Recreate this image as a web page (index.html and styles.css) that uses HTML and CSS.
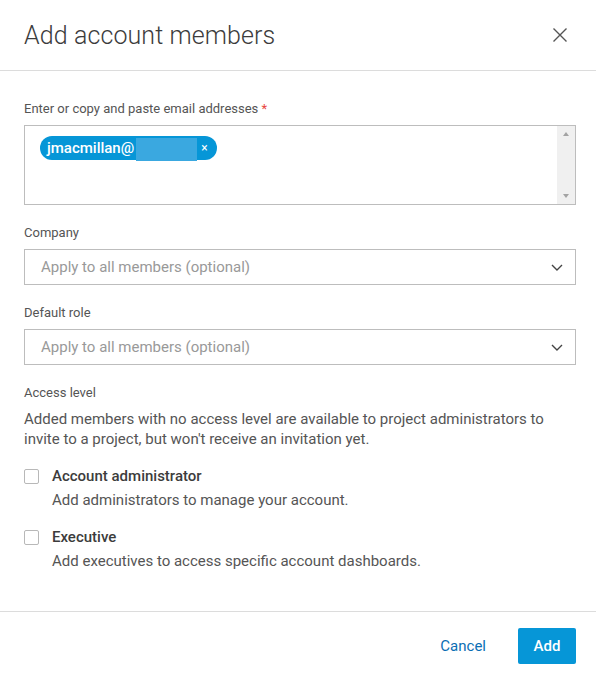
FILE: index.html
```html
<!DOCTYPE html>
<html lang="en">
<head>
    <meta charset="UTF-8" />
    <title>Add account members</title>
    <link rel="stylesheet" href="styles.css">
</head>
<body>

    <div class="dialog">
        <div class="dialog-header">
            <h1>Add account members</h1>
            <button class="close" aria-label="Close">
                <svg width="16" height="16" viewBox="0 0 16 16">
                    <path d="M1.5 1.5 L14.5 14.5 M14.5 1.5 L1.5 14.5" stroke="#555" stroke-width="1.4" fill="none" />
                </svg>
            </button>
        </div>

        <div class="dialog-body">
            <label class="field-label">Enter or copy and paste email addresses <span class="req">*</span></label>
            <div class="emails">
                <div class="emails-inner">
                    <span class="chip">jmacmillan@<span class="redacted"></span><span class="chip-x">×</span></span>
                </div>
                <div class="scrollbar">
                    <span class="arrow-up"></span>
                    <span class="arrow-down"></span>
                </div>
            </div>

            <label class="field-label">Company</label>
            <div class="select">
                <span>Apply to all members (optional)</span>
                <svg width="12" height="7" viewBox="0 0 12 7">
                    <path d="M1 1 L6 6 L11 1" stroke="#444" stroke-width="1.4" fill="none" />
                </svg>
            </div>

            <label class="field-label">Default role</label>
            <div class="select">
                <span>Apply to all members (optional)</span>
                <svg width="12" height="7" viewBox="0 0 12 7">
                    <path d="M1 1 L6 6 L11 1" stroke="#444" stroke-width="1.4" fill="none" />
                </svg>
            </div>

            <label class="field-label">Access level</label>
            <p class="hint">Added members with no access level are available to project administrators to invite to a project, but won't receive an invitation yet.</p>

            <div class="option">
                <span class="checkbox"></span>
                <div>
                    <div class="option-title">Account administrator</div>
                    <div class="option-desc">Add administrators to manage your account.</div>
                </div>
            </div>

            <div class="option">
                <span class="checkbox"></span>
                <div>
                    <div class="option-title">Executive</div>
                    <div class="option-desc">Add executives to access specific account dashboards.</div>
                </div>
            </div>
        </div>

        <div class="dialog-footer">
            <button class="btn-link">Cancel</button>
            <button class="btn-primary">Add</button>
        </div>
    </div>

</body>
</html>
```

FILE: styles.css
```css
body {
    font-family: Roboto, "Liberation Sans", sans-serif;
    background-color: #ffffff;
    color: #3c3c3c;
    margin: 0;
}

.dialog {
    width: 596px;
    height: 676px;
    display: flex;
    flex-direction: column;
}

.dialog-header {
    height: 71px;
    border-bottom: 1px solid #dcdcdc;
    display: flex;
    align-items: center;
    justify-content: space-between;
    padding: 0 24px;
    box-sizing: border-box;
}

h1 {
    font-size: 25px;
    font-weight: 300;
    color: #3c3c3c;
    margin: 0;
    letter-spacing: 0.1px;
}

.close {
    border: none;
    background: none;
    padding: 0;
    margin-right: 4px;
    display: flex;
}

.dialog-body {
    padding: 30px 20px 0 24px;
    flex: 1;
}

.field-label {
    display: block;
    font-size: 13px;
    line-height: 15px;
    color: #555;
    margin-bottom: 9px;
}

.req {
    color: #e8463e;
}

.emails {
    height: 80px;
    border: 1px solid #bdbdbd;
    box-sizing: border-box;
    display: flex;
    margin-bottom: 20px;
}

.emails-inner {
    flex: 1;
    padding: 10px 15px;
}

.chip {
    display: inline-flex;
    align-items: center;
    height: 24px;
    border-radius: 12px;
    background-color: #0696d7;
    color: #fff;
    font-size: 15px;
    font-weight: 500;
    padding: 0 9px 0 7px;
}

.redacted {
    display: inline-block;
    width: 61px;
    height: 23px;
    background-color: #3aa8e0;
    margin: 2px 0 0 2px;
    align-self: flex-start;
}

.chip-x {
    font-size: 12px;
    font-weight: 400;
    margin-left: 4px;
}

.scrollbar {
    width: 18px;
    background-color: #f0f0f0;
    display: flex;
    flex-direction: column;
    justify-content: space-between;
    align-items: center;
    padding: 6px 0;
    box-sizing: border-box;
}

.arrow-up,
.arrow-down {
    width: 0;
    height: 0;
    border-left: 3.5px solid transparent;
    border-right: 3.5px solid transparent;
}

.arrow-up {
    border-bottom: 4px solid #a3a3a3;
}

.arrow-down {
    border-top: 4px solid #a3a3a3;
}

.select {
    height: 36px;
    border: 1px solid #bdbdbd;
    box-sizing: border-box;
    display: flex;
    align-items: center;
    justify-content: space-between;
    padding: 0 12px 0 16px;
    font-size: 15px;
    color: #999;
    margin-bottom: 20px;
}

.hint {
    font-size: 15px;
    line-height: 20px;
    color: #555;
    margin: 0 0 17px;
}

.option {
    display: flex;
    gap: 13px;
    margin-bottom: 17px;
}

.checkbox {
    width: 15px;
    height: 15px;
    border: 1px solid #b8b8b8;
    border-radius: 2px;
    box-sizing: border-box;
    margin-top: 3px;
}

.option-title {
    font-size: 15px;
    font-weight: 500;
    color: #3c3c3c;
    line-height: 20px;
}

.option-desc {
    font-size: 15px;
    color: #555;
    line-height: 20px;
    margin-top: 4px;
}

.dialog-footer {
    height: 65px;
    border-top: 1px solid #dcdcdc;
    box-sizing: border-box;
    display: flex;
    align-items: flex-start;
    justify-content: flex-end;
    padding: 16px 20px 0 24px;
    gap: 32px;
}

.btn-link {
    border: none;
    background: none;
    font-family: inherit;
    font-size: 15px;
    color: #0a6eb4;
    padding: 0;
    height: 36px;
}

.btn-primary {
    border: none;
    background-color: #0696d7;
    color: #fff;
    font-family: inherit;
    font-size: 15px;
    font-weight: 500;
    width: 58px;
    height: 36px;
    border-radius: 2px;
}
```
